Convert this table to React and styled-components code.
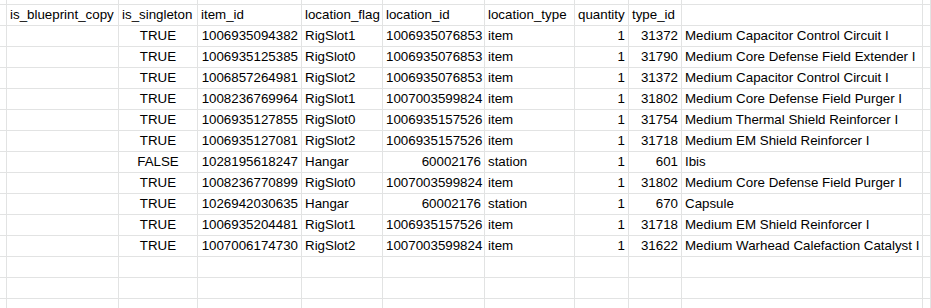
import styled, { createGlobalStyle } from "styled-components"

const columns = [
    { key: "gutter", width: "7px" },
    { key: "is_blueprint_copy", width: "112px" },
    { key: "is_singleton", width: "79px", align: "center" },
    { key: "item_id", width: "104px", align: "right" },
    { key: "location_flag", width: "81px" },
    { key: "location_id", width: "102px", align: "right" },
    { key: "location_type", width: "90px" },
    { key: "quantity", width: "54px", align: "right" },
    { key: "type_id", width: "53px", align: "right" },
    { key: "name", width: "241px" },
    { key: "rest", width: "1fr" }
]

const rows = [
    ["", "TRUE", "1006935094382", "RigSlot1", "1006935076853", "item", "1", "31372", "Medium Capacitor Control Circuit I"],
    ["", "TRUE", "1006935125385", "RigSlot0", "1006935076853", "item", "1", "31790", "Medium Core Defense Field Extender I"],
    ["", "TRUE", "1006857264981", "RigSlot2", "1006935076853", "item", "1", "31372", "Medium Capacitor Control Circuit I"],
    ["", "TRUE", "1008236769964", "RigSlot1", "1007003599824", "item", "1", "31802", "Medium Core Defense Field Purger I"],
    ["", "TRUE", "1006935127855", "RigSlot0", "1006935157526", "item", "1", "31754", "Medium Thermal Shield Reinforcer I"],
    ["", "TRUE", "1006935127081", "RigSlot2", "1006935157526", "item", "1", "31718", "Medium EM Shield Reinforcer I"],
    ["", "FALSE", "1028195618247", "Hangar", "60002176", "station", "1", "601", "Ibis"],
    ["", "TRUE", "1008236770899", "RigSlot0", "1007003599824", "item", "1", "31802", "Medium Core Defense Field Purger I"],
    ["", "TRUE", "1026942030635", "Hangar", "60002176", "station", "1", "670", "Capsule"],
    ["", "TRUE", "1006935204481", "RigSlot1", "1006935157526", "item", "1", "31718", "Medium EM Shield Reinforcer I"],
    ["", "TRUE", "1007006174730", "RigSlot2", "1007003599824", "item", "1", "31622", "Medium Warhead Calefaction Catalyst I"]
]

const GlobalStyle = createGlobalStyle`
    html, body {
        margin: 0;
        padding: 0;
        background: #fff;
        overflow: hidden;
    }
    body {
        font-family: "Liberation Sans", Arial, sans-serif;
    }
`

const Sheet = styled.div`
    display: grid;
    grid-template-columns: ${columns.map(c => c.width).join(" ")};
    width: 931px;
    height: 308px;
    overflow: hidden;
    background: #fff;
`

const Cell = styled.div`
    box-sizing: border-box;
    height: ${p => p.$height || 21}px;
    padding: 0 3px;
    border-right: 1px solid #e2e3e3;
    border-bottom: 1px solid #e2e3e3;
    font-size: 13.33px;
    line-height: 20px;
    color: #000;
    white-space: nowrap;
    overflow: hidden;
    text-align: ${p => p.$align || "left"};
`

const Row = ({ values, height }) => (
    <>
        {columns.map((col, i) => (
            <Cell key={col.key} $align={col.align} $height={height}>
                {i === 0 || i === columns.length - 1 ? "" : values[i - 1]}
            </Cell>
        ))}
    </>
)

const header = columns.slice(1, -1).map(c => (c.key === "name" ? "" : c.key))

const App = () => {
    return (
        <>
            <GlobalStyle />
            <Sheet>
                <Row values={[]} height={5} />
                {columns.map((col, i) => (
                    <Cell key={"h" + col.key}>{i === 0 || i === columns.length - 1 ? "" : header[i - 1]}</Cell>
                ))}
                {rows.map((r, i) => (
                    <Row key={i} values={r} />
                ))}
                <Row values={[]} />
                <Row values={[]} />
                <Row values={[]} />
            </Sheet>
        </>
    )
}

export default App
